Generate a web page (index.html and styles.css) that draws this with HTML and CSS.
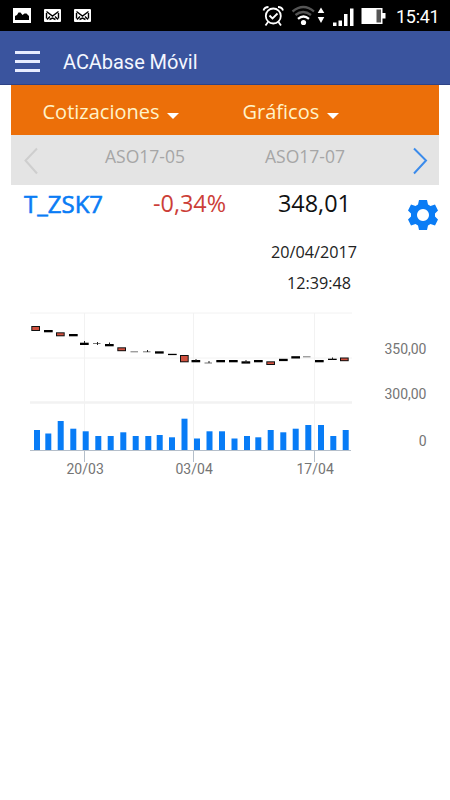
FILE: index.html
```html
<!DOCTYPE html>
<html lang="es">
<head>
<meta charset="UTF-8">
<meta name="viewport" content="width=device-width, initial-scale=1.0">
<title>ACAbase Móvil</title>
<link rel="stylesheet" href="styles.css">
</head>
<body>
<div class="status-bar">
    <div class="notifications">
        <svg width="18" height="15" viewBox="0 0 18 15">
            <rect width="18" height="15" fill="#fff"/>
            <path d="M2 12V8l2-1 1.500-2.500h2L9.500 7l2-1.500h2L16 8v4z" fill="#000"/>
        </svg>
        <svg class="mail" width="17" height="13" viewBox="0 0 17 13">
            <rect width="17" height="13" rx="1" fill="#fff"/>
            <path d="M2.5 2.500l6 4.500 6-4.500M2.500 4v5.500M14.500 4v5.500M3 10.500l3-3M14 10.500l-3-3M5.500 10.500l3-1.500 3 1.500" fill="none" stroke="#000" stroke-width="1.400"/>
        </svg>
        <svg class="mail" width="17" height="13" viewBox="0 0 17 13">
            <rect width="17" height="13" rx="1" fill="#fff"/>
            <path d="M2.5 2.500l6 4.500 6-4.500M2.500 4v5.500M14.500 4v5.500M3 10.500l3-3M14 10.500l-3-3M5.500 10.500l3-1.500 3 1.500" fill="none" stroke="#000" stroke-width="1.400"/>
        </svg>
    </div>
    <div class="system">
        <svg width="125" height="22" viewBox="262 5 125 22">
            <g fill="none" stroke="#fff" stroke-width="1.8">
                <circle cx="273.300" cy="16" r="7.500"/>
                <path d="M269.500 15.500l3 3 5-5M263.500 10.500q1-3.500 5-3.500M283 10.500q-1-3.500-5-3.500M268 22l-2.500 3.500M278.500 22l2.500 3.500"/>
            </g>
            <g fill="none" stroke-width="2.300">
                <path d="M292.500 11.500q11-9 21.500 0" stroke="#555"/>
                <path d="M295.500 15q7.500-6 15.500 0" stroke="#555"/>
                <path d="M298 18.800q5.500-4.500 11 0" stroke="#fff"/>
            </g>
            <circle cx="303.500" cy="22.500" r="2.600" fill="#fff"/>
            <path d="M317.700 13l3.300-5.500 3.300 5.500zM317.700 17h6.600l-3.300 6z" fill="#fff"/>
            <path d="M333 22.500h3.500v3.500h-3.500zM338.500 20.500h3.500v5.500h-3.500zM344 14h3.500v12h-3.500zM350 8.500h3.500v17.500h-3.500z" fill="#fff" />
            <path d="M361.500 8h21v5h3v5.500h-3v5.500h-21z" fill="#fff"/>
            <path d="M376.500 9.500h4.500v13h-4.500z" fill="#555"/>
        </svg>
        <span class="clock">15:41</span>
    </div>
</div>
<div class="app-bar">
    <div class="menu-icon"><span></span><span></span><span></span></div>
    <h1>ACAbase Móvil</h1>
</div>
<div class="content">
    <div class="tabs">
        <div class="tab cotizaciones">Cotizaciones<i></i></div>
        <div class="tab graficos">Gráficos<i></i></div>
    </div>
    <div class="contracts">
        <svg class="prev" width="14" height="28" viewBox="0 0 14 28"><path d="M13 1.500L1.500 13.500 13 26.500"/></svg>
        <span class="first">ASO17-05</span>
        <span class="second">ASO17-07</span>
        <svg class="next" width="15" height="28" viewBox="0 0 15 28"><path d="M1 1.500L13 13.500 1 26.500"/></svg>
    </div>
    <div class="quote">
        <span class="symbol">T_ZSK7</span>
        <span class="change">-0,34%</span>
        <span class="price">348,01</span>
        <svg class="gear" width="30" height="30" viewBox="0 0 30 30">
            <path fill="#0a7cf5" fill-rule="evenodd" d="M11 0h8l1 4.500 2.500 1.500 4.500-1.500 3 6-3 3v3l3 3-3 6-4.500-1.500-2.500 1.500-1 4.500h-8l-1-4.500-2.500-1.500L3 25.500l-3-6 3-3v-3l-3-3 3-6L7.500 6 10 4.500zM15 9a6 6 0 1 0 .01 0z"/>
        </svg>
    </div>
    <div class="date">20/04/2017</div>
    <div class="time">12:39:48</div>
</div>
<div class="chart">
    <svg id="plot" width="450" height="180" viewBox="0 305 450 180">
        <g stroke="#f2f2f2">
            <path d="M30 313H352M30 358H352M84.500 313V450M193.500 313V450M314.500 313V450"/>
            <path d="M30 402.500H352" stroke-width="2.500"/>
        </g>
        <path d="M30 450.500H351M84.500 451V462M193.500 451V462M314.500 451V462" stroke="#b5bfca" fill="none"/>
        <g id="candles"></g>
        <g id="volume"></g>
        <g class="dates">
            <text x="66.500" y="474">20/03</text>
            <text x="175.500" y="474">03/04</text>
            <text x="296.500" y="474">17/04</text>
        </g>
        <g class="values">
            <text x="426.500" y="354">350,00</text>
            <text x="426.500" y="399">300,00</text>
            <text x="426.500" y="446">0</text>
        </g>
    </svg>
</div>

<script>
    const svgNs = 'http://www.w3.org/2000/svg';

    function addRect(parent, x, y, width, height, fill) {
        const rect = document.createElementNS(svgNs, 'rect');
        rect.setAttribute('x', x);
        rect.setAttribute('y', y);
        rect.setAttribute('width', width);
        rect.setAttribute('height', height);
        rect.setAttribute('fill', fill);
        document.getElementById(parent).appendChild(rect);
    }

    // x, y, height, color, wick top, wick height
    const candles = [
        [31.3, 326, 5, 'red'], [44, 330, 2.3, '#000'], [56, 332.3, 4, 'red'], [69, 334, 2.3, '#000'],
        [80, 342.7, 2.3, '#000', 341, 2], [93, 343, 1, '#777', 342, 3], [105, 344, 2.3, '#000', 342.5, 2],
        [117.3, 347.3, 3.9, 'red'], [130.5, 351.3, 1, '#777'], [143, 351.3, 1, '#777', 350, 2],
        [155, 351.3, 2.3, '#000'], [168, 353.8, 1.3, '#000'], [180, 355, 7.3, 'red'],
        [191.5, 360, 2.3, '#000', 359, 2], [204.5, 362.5, 1, '#777', 361, 2],
        [216.3, 360, 2.3, '#000'], [229, 360, 2.3, '#000'], [241.5, 361.3, 2.3, '#000', 360, 3],
        [254, 360, 2.3, '#000'], [266.3, 361.3, 3.7, 'red'], [279, 358.8, 2.3, '#000'],
        [291.3, 356.2, 2.3, '#000'], [303, 356.3, 1, '#777'], [315, 360, 2.3, '#000'],
        [328, 358.7, 1.3, '#000', 357.5, 2], [340, 357.5, 3.7, 'red']
    ];

    candles.forEach(function (c) {
        if (c[3] === 'red') {
            addRect('candles', c[0], c[1], 8.7, c[2], '#111');
            addRect('candles', c[0] + 1, c[1] + 1, 6.7, c[2] - 2, '#d0513f');
        } else {
            addRect('candles', c[0], c[1], c[3] === '#777' ? 7.5 : 8.7, c[2], c[3]);
        }
        if (c[4]) {
            addRect('candles', c[0] + 4, c[4], 1, c[5], '#222');
        }
    });

    const bars = [
        [34, 430], [45.3, 433.5], [57.7, 421], [70.3, 428.7], [82.7, 431.3], [95.3, 436],
        [107.7, 436], [120.3, 432.3], [132.7, 436], [145.3, 436], [156.7, 435], [169, 437.3],
        [181.5, 418.7], [194, 438.5], [206.5, 431.3], [219, 431.3], [231.5, 438.5],
        [244, 436], [255.3, 437.3], [267.7, 430], [280.3, 432.3], [292.7, 428.7],
        [305.3, 425], [318, 425], [330.3, 436], [342.7, 430]
    ];

    bars.forEach(function (b) {
        addRect('volume', b[0], b[1], 6, 450 - b[1], '#087cf6');
    });
</script>
</body>
</html>
```
FILE: styles.css
```css
body {
  font-family: 'Open Sans', 'Noto Sans', sans-serif;
  margin: 0;
  min-height: 100vh;
  background-color: #fff;
}

.status-bar {
  display: flex;
  justify-content: space-between;
  height: 31px;
  background-color: #000;
}

.notifications {
  display: flex;
  gap: 13px;
  padding: 8px 0 0 13px;
}

.mail {
  margin-top: 1px;
}

.system {
  display: flex;
  padding: 5px 11px 0 0;
}

.clock {
  width: 43px;
  margin-left: 9px;
  font: 18px/23px Roboto, sans-serif;
  letter-spacing: -0.3px;
  color: #fff;
  white-space: nowrap;
}

.app-bar {
  display: flex;
  box-sizing: border-box;
  height: 54px;
  padding-left: 15px;
  background-color: #3a549e;
  border-bottom: 1px solid #2d4286;
}

.menu-icon {
  display: flex;
  flex-direction: column;
  gap: 6px;
  width: 25px;
  padding-top: 20px;
}

.menu-icon span {
  height: 3px;
  background-color: #e6ecff;
}

h1 {
  margin: 0 0 0 23px;
  font: 20px/62px Roboto, sans-serif;
  letter-spacing: -0.05px;
  color: #f4f7ff;
}

.content {
  width: 428px;
  margin-left: 11px;
}

.tabs {
  display: flex;
  height: 50px;
  background-color: #ec6f09;
  color: #fff3c9;
  font-size: 20px;
  line-height: 53px;
}

.tab i {
  display: inline-block;
  margin-left: 8px;
  border: 6px solid transparent;
  border-top-color: #fff;
  border-bottom: 0;
}

.cotizaciones {
  width: 200px;
  padding-left: 31.5px;
}

.contracts {
  display: flex;
  height: 50px;
  background-color: #e4e4e4;
  color: #a6a6a6;
  font-size: 17.5px;
  line-height: 42px;
  white-space: nowrap;
}

.contracts svg {
  flex: none;
  margin-top: 12px;
  fill: none;
  stroke-width: 2;
}

.prev {
  margin-left: 13px;
  stroke: #cecece;
}

.next {
  margin-left: 68px;
  stroke: #3b8beb;
}

.first {
  width: 160px;
  margin-left: 67px;
}

.second {
  width: 80px;
}

.quote {
  display: flex;
  height: 50px;
  font-size: 23.4px;
  line-height: 37px;
}

.symbol {
  width: 129px;
  padding-left: 13px;
  color: #0a7cf5;
  font-size: 24px;
  -webkit-text-stroke: 0.6px #0a7cf5;
}

.change {
  width: 125px;
  color: #cc3e38;
}

.price {
  width: 130px;
  color: #111;
}

.gear {
  margin-top: 15px;
}

.date,
.time {
  height: 31px;
  padding-left: 260px;
  font-size: 16.2px;
  line-height: 34px;
  color: #222;
}

.time {
  padding-left: 276px;
}

.chart {
  margin-top: 8px;
}

.chart svg {
  display: block;
}

.chart text {
  font-family: Roboto, sans-serif;
  font-size: 14px;
  fill: #757575;
}

.values {
  text-anchor: end;
}
```
